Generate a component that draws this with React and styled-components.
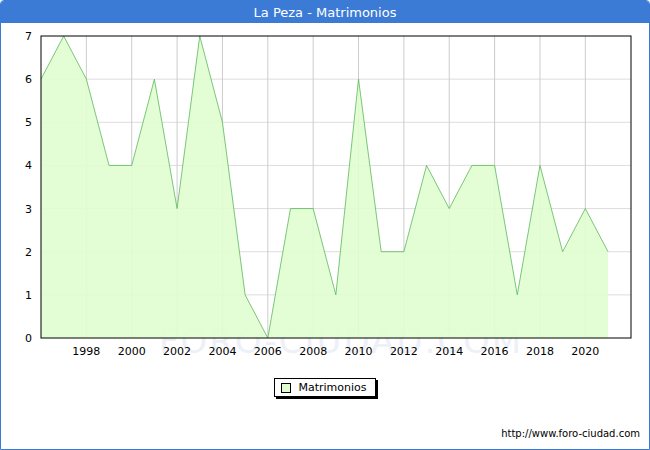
import React from 'react';
import styled, { createGlobalStyle } from 'styled-components';

const Global = createGlobalStyle`
  body { margin: 0; background: #fff; font-family: "DejaVu Sans", Verdana, sans-serif; }
`;

const Frame = styled.div`
  width: 650px;
  height: 450px;
  box-sizing: border-box;
  border: 1px solid #3b7bd6;
  border-radius: 4px 4px 0 0;
  display: flex;
  flex-direction: column;
  overflow: hidden;
`;

const TitleBar = styled.div`
  height: 22px;
  background: #3b7bd6;
  color: #fff;
  font-size: 13px;
  display: flex;
  align-items: center;
  justify-content: center;
`;

const ChartArea = styled.div`
  position: relative;
  height: 340px;
`;

const LegendRow = styled.div`
  display: flex;
  justify-content: center;
  margin-top: 15px;
`;

const Legend = styled.div`
  display: flex;
  align-items: center;
  gap: 7px;
  padding: 2px 8px 2px 6px;
  border: 1px solid #000;
  box-shadow: 2px 2px 0 #000;
  font-size: 11px;
`;

const Swatch = styled.span`
  width: 8px;
  height: 8px;
  background: #e0fdd0;
  border: 1px solid #000;
`;

const Footer = styled.div`
  margin-top: auto;
  padding: 0 9px 10px 0;
  text-align: right;
  font-size: 10px;
`;

const data = [6,7,6,4,4,6,3,7,5,1,0,3,3,1,6,2,2,4,3,4,4,1,4,2,3,2];
const X0 = 40, X1 = 630, Y0 = 13, Y1 = 315;
const step = (607 - 40) / 25;
const px = i => X0 + i * step;
const py = v => Y1 - v * (Y1 - Y0) / 7;

const Chart = () => {
  const pts = data.map((v, i) => `${px(i)},${py(v)}`).join(' ');
  const area = `${px(0)},${Y1} ${pts} ${px(25)},${Y1}`;
  const years = [];
  for (let y = 1998; y <= 2020; y += 2) years.push(y);
  return (
    <svg width="650" height="340" style={{ display: 'block' }} fontFamily="DejaVu Sans, sans-serif" fontSize="11">
      <text x="340" y="330" textAnchor="middle" fontSize="34" fill="#eef0f8" letterSpacing="2">FORO-CIUDAD.COM</text>
      {[1,2,3,4,5,6].map(v => <line key={v} x1={X0} x2={X1} y1={py(v)} y2={py(v)} stroke="#ddd" />)}
      {years.map(y => <line key={y} x1={px(y-1996)} x2={px(y-1996)} y1={Y0} y2={Y1} stroke="#ccc" />)}
      <polygon points={area} fill="#e0fdd0" fillOpacity="0.9" />
      <polyline points={pts} fill="none" stroke="#5cb85c" strokeWidth="0.8" />
      <rect x={X0} y={Y0} width={X1-X0} height={Y1-Y0} fill="none" stroke="#000" />
      {[0,1,2,3,4,5,6,7].map(v => <text key={v} x="31" y={py(v)+4} textAnchor="end">{v}</text>)}
      {years.map(y => <text key={y} x={px(y-1996)} y="332" textAnchor="middle">{y}</text>)}
    </svg>
  );
};

export default function App() {
  return (
    <Frame>
      <Global />
      <TitleBar>La Peza - Matrimonios</TitleBar>
      <ChartArea><Chart /></ChartArea>
      <LegendRow>
        <Legend><Swatch />Matrimonios</Legend>
      </LegendRow>
      <Footer>http://www.foro-ciudad.com</Footer>
    </Frame>
  );
}
